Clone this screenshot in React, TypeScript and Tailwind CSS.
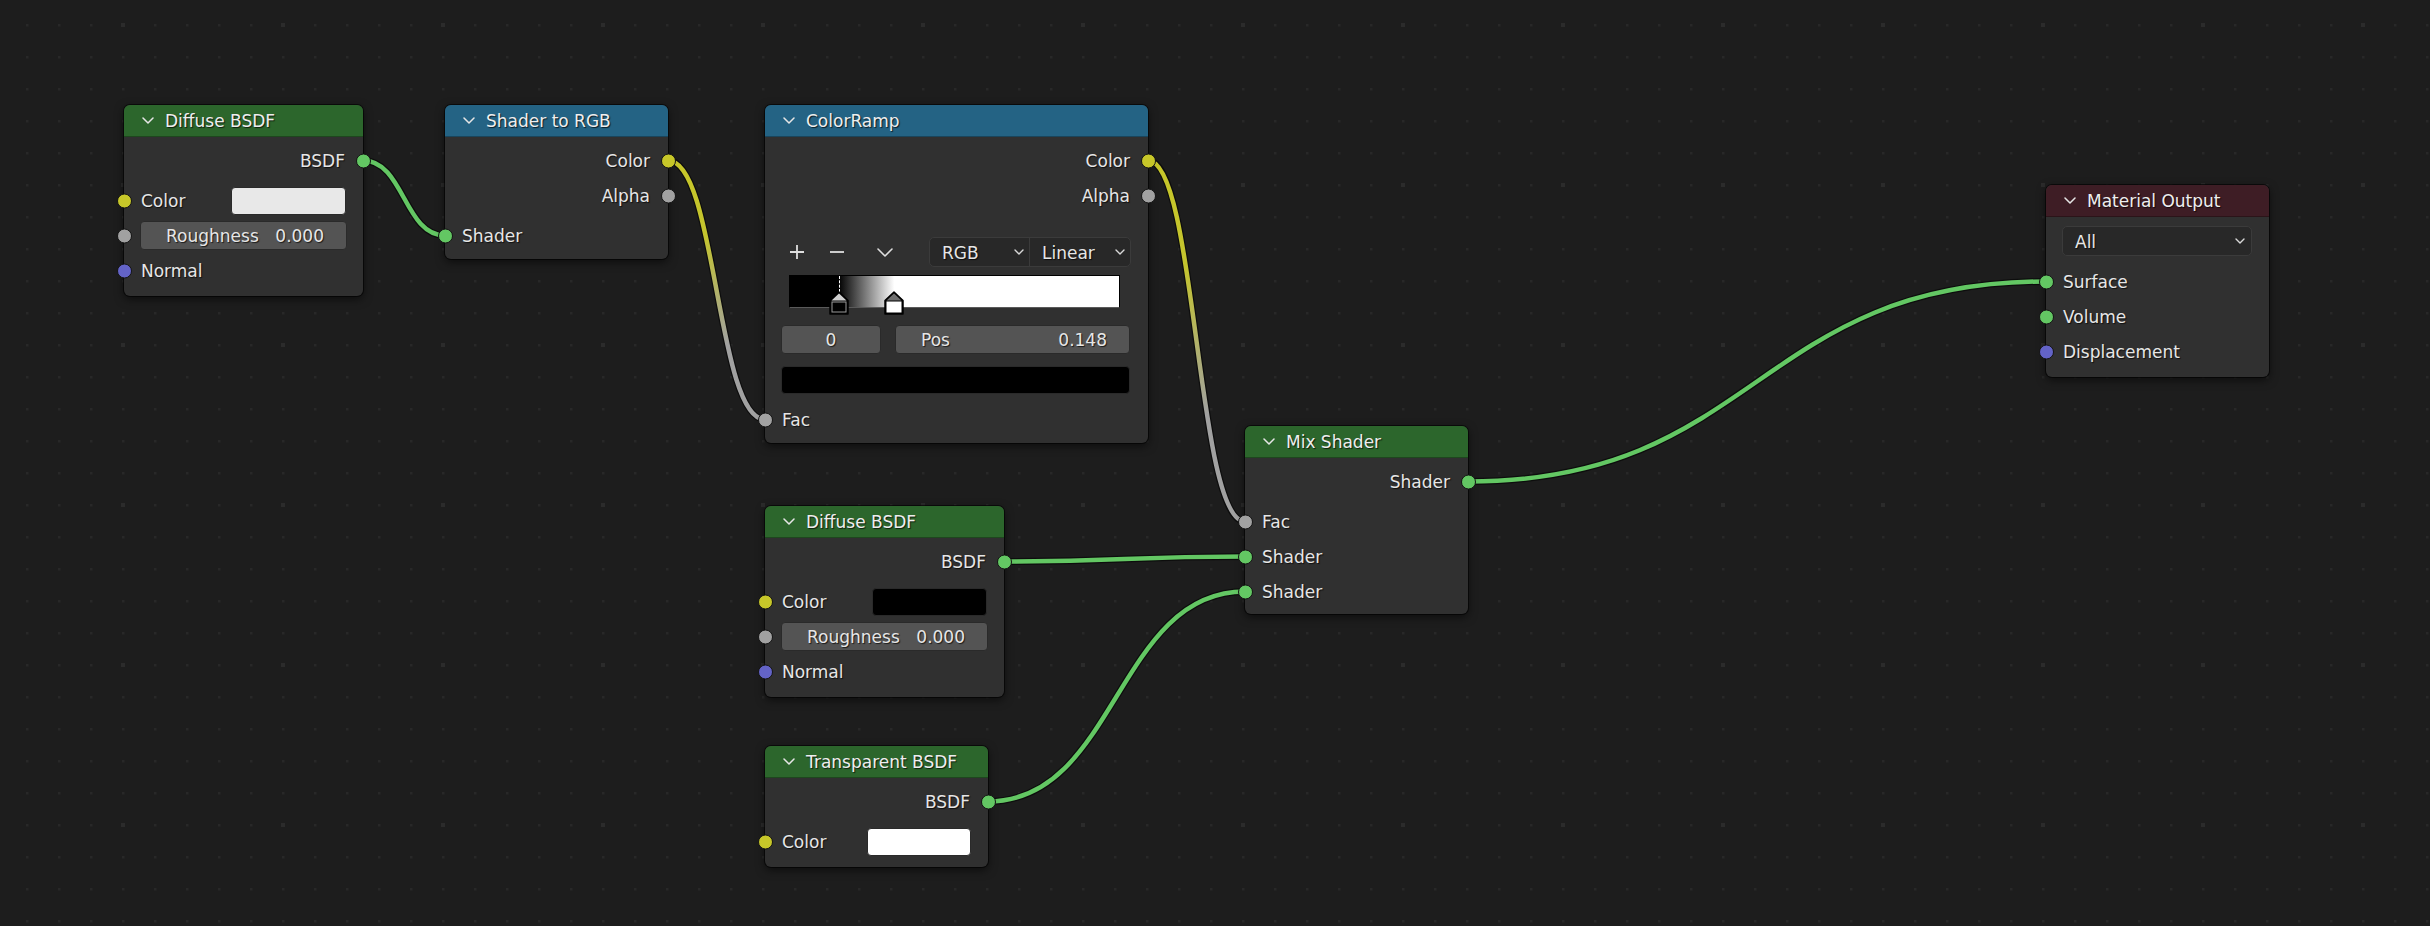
import React from 'react';

type SockKind = 'shader' | 'color' | 'float' | 'vector';

const sockBg: Record<SockKind, string> = {
  shader: 'bg-[#63c763]',
  color: 'bg-[#c7c729]',
  float: 'bg-[#a1a1a1]',
  vector: 'bg-[#6363c7]',
};

function Socket({ kind, side }: { kind: SockKind; side: 'l' | 'r' }) {
  const pos = side === 'l' ? 'left-[-7.5px]' : 'right-[-7.5px]';
  return (
    <span
      className={`absolute top-1/2 -translate-y-1/2 ${pos} h-[15px] w-[15px] rounded-full border-[1.5px] border-[#141414] ${sockBg[kind]}`}
    />
  );
}

function Chevron({ w = 12, h = 7, color = '#e6e6e6', sw = 1.5 }: { w?: number; h?: number; color?: string; sw?: number }) {
  return (
    <svg width={w} height={h} viewBox={`0 0 ${w} ${h}`} className="shrink-0">
      <path d={`M1 1 L${w / 2} ${h - 1} L${w - 1} 1`} stroke={color} strokeWidth={sw} fill="none" strokeLinecap="round" strokeLinejoin="round" />
    </svg>
  );
}

function T({ children }: { children: React.ReactNode }) {
  return <span className="pt-[2px]">{children}</span>;
}

function Out({ label, kind }: { label: string; kind: SockKind }) {
  return (
    <div className="relative flex h-[35px] items-center justify-end pr-[18px]">
      <T>{label}</T>
      <Socket kind={kind} side="r" />
    </div>
  );
}

function In({ label, kind, children }: { label: string; kind: SockKind; children?: React.ReactNode }) {
  return (
    <div className="relative flex h-[35px] items-center pl-[17px] pr-[17px]">
      <T>{label}</T>
      {children && <div className="ml-auto flex">{children}</div>}
      <Socket kind={kind} side="l" />
    </div>
  );
}

function SliderIn({ label, value, kind }: { label: string; value: string; kind: SockKind }) {
  return (
    <div className="relative flex h-[35px] items-center px-[16px]">
      <div className="flex h-[29px] flex-1 items-center justify-between rounded-[4px] border border-[#2a2a2a] bg-[#545454] pl-[25px] pr-[22px]">
        <T>{label}</T>
        <T>{value}</T>
      </div>
      <Socket kind={kind} side="l" />
    </div>
  );
}

function Node({
  pos,
  title,
  header,
  pb,
  children,
}: {
  pos: string;
  title: string;
  header: string;
  pb: string;
  children: React.ReactNode;
}) {
  return (
    <div className={`absolute ${pos} ${pb} rounded-[6px] bg-[#303030] shadow-[0_3px_10px_rgba(0,0,0,0.6)] ring-1 ring-black/60`}>
      <div className={`flex h-[32px] items-center rounded-t-[6px] border-b border-black/30 pl-[18px] ${header}`}>
        <Chevron />
        <span className="ml-[11px] pt-[2px] text-[#eeeeee]">{title}</span>
      </div>
      <div className="pt-[6px]">{children}</div>
    </div>
  );
}

function Gap() {
  return <div className="h-[5px]" />;
}

function Marker({ active }: { active?: boolean }) {
  return (
    <svg width="20" height="24" viewBox="0 0 20 24">
      <path d="M10 1 L19 9.5 L19 23 L1 23 L1 9.5 Z" fill="#000" stroke="#000" strokeWidth="1.5" strokeLinejoin="round" />
      <path d="M10 2.5 L17.5 9.5 L2.5 9.5 Z" fill={active ? '#d0d0d0' : '#6e6e6e'} />
      <rect x="3" y="11" width="14" height="10" fill={active ? '#000' : '#fff'} stroke={active ? '#9a9a9a' : '#fff'} strokeWidth="1" />
    </svg>
  );
}

function ColorRampBody() {
  return (
    <>
      <Out label="Color" kind="color" />
      <Out label="Alpha" kind="float" />

      <div className="mt-[24px] flex h-[30px] items-center pl-[17px] pr-[17px]">
        <div className="flex w-[30px] justify-center">
          <svg width="16" height="16" viewBox="0 0 16 16">
            <path d="M8 1 V15 M1 8 H15" stroke="#dedede" strokeWidth="1.8" />
          </svg>
        </div>
        <div className="ml-[10px] flex w-[30px] justify-center">
          <svg width="16" height="16" viewBox="0 0 16 16">
            <path d="M1 8 H15" stroke="#dedede" strokeWidth="1.8" />
          </svg>
        </div>
        <div className="ml-[18px] flex w-[30px] justify-center">
          <Chevron w={16} h={9} color="#dedede" sw={1.6} />
        </div>
        <div className="ml-auto flex h-[30px] w-[202px] rounded-[5px] border border-[#3b3b3b] bg-[#282828]">
          <div className="flex w-[100px] items-center justify-between border-r border-[#3b3b3b] pl-[12px] pr-[5px]">
            <T>RGB</T>
            <Chevron w={10} h={6} color="#d8d8d8" sw={1.4} />
          </div>
          <div className="flex flex-1 items-center justify-between pl-[12px] pr-[5px]">
            <T>Linear</T>
            <Chevron w={10} h={6} color="#d8d8d8" sw={1.4} />
          </div>
        </div>
      </div>

      <div className="ml-[24px] mr-[28px] mt-[8px]">
        <div className="relative h-[33px] border border-black border-b-[#5a5a5a] bg-[linear-gradient(to_right,#000_0%,#000_14.8%,#fff_31.7%,#fff_100%)]">
          <div className="absolute left-[14.8%] top-0 h-[16px] border-l border-dashed border-white" />
          <div className="absolute left-[calc(14.8%-10px)] top-[15px]">
            <Marker active />
          </div>
          <div className="absolute left-[calc(31.7%-10px)] top-[15px]">
            <Marker />
          </div>
        </div>
      </div>

      <div className="mt-[17px] flex gap-[14px] pl-[16px] pr-[18px]">
        <div className="flex h-[29px] w-[100px] items-center justify-center rounded-[4px] border border-[#2a2a2a] bg-[#545454]">
          <T>0</T>
        </div>
        <div className="flex h-[29px] flex-1 items-center justify-between rounded-[4px] border border-[#2a2a2a] bg-[#545454] pl-[25px] pr-[22px]">
          <T>Pos</T>
          <T>0.148</T>
        </div>
      </div>

      <div className="mt-[12px] pl-[16px] pr-[18px]">
        <div className="h-[28px] rounded-[4px] border border-[#2a2a2a] bg-black" />
      </div>

      <div className="mt-[8px]">
        <In label="Fac" kind="float" />
      </div>
    </>
  );
}

function link(x1: number, y1: number, x2: number, y2: number) {
  const h = Math.abs(x2 - x1) * 0.5;
  return `M${x1} ${y1} C${x1 + h} ${y1} ${x2 - h} ${y2} ${x2} ${y2}`;
}

const links: { d: string; stroke: string }[] = [
  { d: link(363, 160.5, 445, 235.5), stroke: '#63c763' },
  { d: link(668, 160.5, 765, 419.5), stroke: 'url(#g1)' },
  { d: link(1148, 160.5, 1245, 521.5), stroke: 'url(#g2)' },
  { d: link(1004, 561.5, 1245, 556.5), stroke: '#63c763' },
  { d: link(988, 801.5, 1245, 591.5), stroke: '#63c763' },
  { d: link(1468, 481.5, 2046, 281.5), stroke: '#63c763' },
];

function Canvas() {
  return (
    <svg className="absolute inset-0" width="2430" height="926">
      <defs>
        <pattern id="dots" x="0" y="0" width="32" height="32" patternUnits="userSpaceOnUse">
          <rect x="26" y="24" width="2.5" height="2.5" fill="#282828" />
        </pattern>
        <pattern id="bigdots" x="0" y="0" width="160" height="160" patternUnits="userSpaceOnUse">
          <rect x="121" y="23" width="4" height="4" fill="#2b2b2b" />
        </pattern>
        <linearGradient id="g1" gradientUnits="userSpaceOnUse" x1="668" y1="160" x2="765" y2="420">
          <stop offset="0" stopColor="#c7c729" />
          <stop offset="0.3" stopColor="#c4c42e" />
          <stop offset="0.7" stopColor="#a1a1a1" />
          <stop offset="1" stopColor="#a1a1a1" />
        </linearGradient>
        <linearGradient id="g2" gradientUnits="userSpaceOnUse" x1="1148" y1="160" x2="1245" y2="521">
          <stop offset="0" stopColor="#c7c729" />
          <stop offset="0.3" stopColor="#c4c42e" />
          <stop offset="0.7" stopColor="#a1a1a1" />
          <stop offset="1" stopColor="#a1a1a1" />
        </linearGradient>
      </defs>
      <rect width="2430" height="926" fill="url(#dots)" />
      <rect width="2430" height="926" fill="url(#bigdots)" />
      {links.map((l, i) => (
        <g key={i} fill="none">
          <path d={l.d} stroke="rgba(0,0,0,0.55)" strokeWidth="7" />
          <path d={l.d} stroke={l.stroke} strokeWidth="4.5" />
        </g>
      ))}
    </svg>
  );
}

export default function App() {
  return (
    <div className="relative h-[926px] w-[2430px] overflow-hidden bg-[#1d1d1d] font-['DejaVu_Sans',sans-serif] text-[17px] leading-none text-[#e6e6e6] [text-shadow:1px_1px_1px_rgba(0,0,0,0.7)]">
      <Canvas />

      <Node pos="left-[124px] top-[105px] w-[239px]" title="Diffuse BSDF" header="bg-[#2c662c]" pb="pb-[8px]">
        <Out label="BSDF" kind="shader" />
        <Gap />
        <In label="Color" kind="color">
          <div className="h-[28px] w-[115px] rounded-[4px] border border-[#2a2a2a] bg-[#e8e8e8]" />
        </In>
        <SliderIn label="Roughness" value="0.000" kind="float" />
        <In label="Normal" kind="vector" />
      </Node>

      <Node pos="left-[445px] top-[105px] w-[223px]" title="Shader to RGB" header="bg-[#246384]" pb="pb-[6px]">
        <Out label="Color" kind="color" />
        <Out label="Alpha" kind="float" />
        <Gap />
        <In label="Shader" kind="shader" />
      </Node>

      <Node pos="left-[765px] top-[105px] w-[383px]" title="ColorRamp" header="bg-[#246384]" pb="pb-[6px]">
        <ColorRampBody />
      </Node>

      <Node pos="left-[1245px] top-[426px] w-[223px]" title="Mix Shader" header="bg-[#2c662c]" pb="pb-[5px]">
        <Out label="Shader" kind="shader" />
        <Gap />
        <In label="Fac" kind="float" />
        <In label="Shader" kind="shader" />
        <In label="Shader" kind="shader" />
      </Node>

      <Node pos="left-[765px] top-[506px] w-[239px]" title="Diffuse BSDF" header="bg-[#2c662c]" pb="pb-[8px]">
        <Out label="BSDF" kind="shader" />
        <Gap />
        <In label="Color" kind="color">
          <div className="h-[28px] w-[115px] rounded-[4px] border border-[#2a2a2a] bg-black" />
        </In>
        <SliderIn label="Roughness" value="0.000" kind="float" />
        <In label="Normal" kind="vector" />
      </Node>

      <Node pos="left-[765px] top-[746px] w-[223px]" title="Transparent BSDF" header="bg-[#2c662c]" pb="pb-[8px]">
        <Out label="BSDF" kind="shader" />
        <Gap />
        <In label="Color" kind="color">
          <div className="h-[28px] w-[104px] rounded-[4px] border border-[#2a2a2a] bg-white" />
        </In>
      </Node>

      <Node pos="left-[2046px] top-[185px] w-[223px]" title="Material Output" header="bg-[#3e1d25]" pb="pb-[8px]">
        <div className="pl-[16px] pr-[17px] pt-[3px]">
          <div className="flex h-[30px] items-center justify-between rounded-[5px] border border-[#3b3b3b] bg-[#282828] pl-[12px] pr-[6px]">
            <T>All</T>
            <Chevron w={10} h={6} color="#d8d8d8" sw={1.4} />
          </div>
        </div>
        <div className="mt-[8px]">
          <In label="Surface" kind="shader" />
          <In label="Volume" kind="shader" />
          <In label="Displacement" kind="vector" />
        </div>
      </Node>
    </div>
  );
}
